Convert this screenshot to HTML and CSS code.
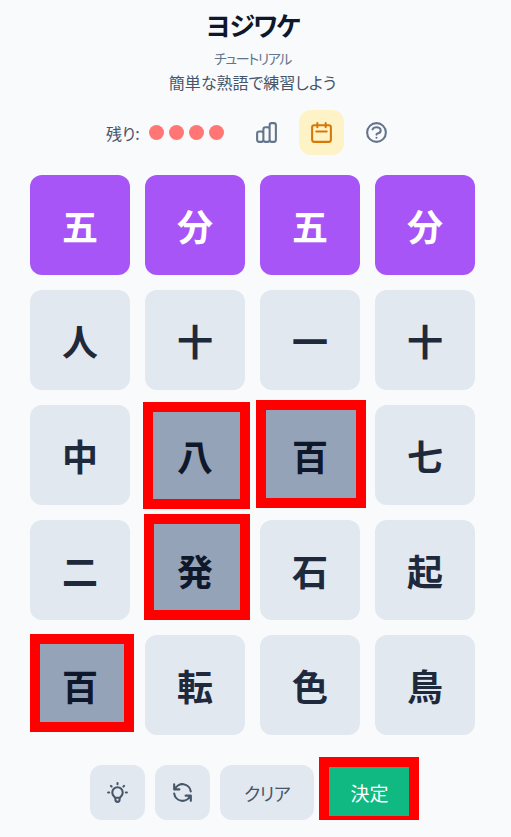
FILE: index.html
```html
<!DOCTYPE html>
<html lang="ja">
<head>
  <meta charset="UTF-8">
  <meta name="viewport" content="width=device-width, initial-scale=1.0">
  <title>ヨジワケ</title>
  <link rel="stylesheet" href="styles.css">
</head>
<body>
  <main class="app">
    <header class="header">
      <h1 class="title">ヨジワケ</h1>
      <p class="mode">チュートリアル</p>
      <p class="desc">簡単な熟語で練習しよう</p>
    </header>

    <div class="status">
      <span class="lives-label">残り:</span>
      <div class="lives">
        <span class="dot"></span>
        <span class="dot"></span>
        <span class="dot"></span>
        <span class="dot"></span>
      </div>
      <div class="status-buttons">
        <button class="icon-btn">
          <svg viewBox="0 0 24 24"><path d="M9 19v-6a2 2 0 00-2-2H5a2 2 0 00-2 2v6a2 2 0 002 2h2a2 2 0 002-2zm0 0V9a2 2 0 012-2h2a2 2 0 012 2v10m-6 0a2 2 0 002 2h2a2 2 0 002-2m0 0V5a2 2 0 012-2h2a2 2 0 012 2v14a2 2 0 01-2 2h-2a2 2 0 01-2-2z"/></svg>
        </button>
        <button class="icon-btn icon-btn-active">
          <svg viewBox="0 0 24 24"><path d="M8 7V3m8 4V3m-9 8h10M5 21h14a2 2 0 002-2V7a2 2 0 00-2-2H5a2 2 0 00-2 2v12a2 2 0 002 2z"/></svg>
        </button>
        <button class="icon-btn">
          <svg viewBox="0 0 24 24"><path d="M8.228 9c.549-1.165 2.03-2 3.772-2 2.21 0 4 1.343 4 3 0 1.4-1.278 2.575-3.006 2.907-.542.104-.994.54-.994 1.093m0 3h.01M21 12a9 9 0 11-18 0 9 9 0 0118 0z"/></svg>
        </button>
      </div>
    </div>

    <div class="board">
      <div class="tile tile-solved">五</div>
      <div class="tile tile-solved">分</div>
      <div class="tile tile-solved">五</div>
      <div class="tile tile-solved">分</div>

      <div class="tile">人</div>
      <div class="tile">十</div>
      <div class="tile">一</div>
      <div class="tile">十</div>

      <div class="tile">中</div>
      <div class="tile tile-selected">八<span class="mark mark-hachi"></span></div>
      <div class="tile tile-selected">百<span class="mark mark-hyaku"></span></div>
      <div class="tile">七</div>

      <div class="tile">二</div>
      <div class="tile tile-selected">発<span class="mark mark-hatsu"></span></div>
      <div class="tile">石</div>
      <div class="tile">起</div>

      <div class="tile tile-selected">百<span class="mark mark-hyaku2"></span></div>
      <div class="tile">転</div>
      <div class="tile">色</div>
      <div class="tile">鳥</div>
    </div>

    <div class="controls">
      <button class="ctrl ctrl-icon">
        <svg viewBox="0 0 24 24"><path d="M9.663 17h4.673M12 3v1m6.364 1.636l-.707.707M21 12h-1M4 12H3m3.343-5.657l-.707-.707m2.828 9.9a5 5 0 117.072 0l-.548.547A3.374 3.374 0 0014 18.469V19a2 2 0 11-4 0v-.531c0-.895-.356-1.754-.988-2.386l-.548-.547z"/></svg>
      </button>
      <button class="ctrl ctrl-icon">
        <svg viewBox="0 0 24 24"><path d="M4 4v5h.582m15.356 2A8.001 8.001 0 004.582 9m0 0H9m11 11v-5h-.581m0 0a8.003 8.003 0 01-15.357-2m15.357 2H15"/></svg>
      </button>
      <button class="ctrl ctrl-text">クリア</button>
      <button class="ctrl ctrl-submit">決定<span class="mark mark-submit"></span></button>
    </div>
  </main>
</body>
</html>
```

FILE: styles.css
```css
body {
  margin: 0;
  background-color: #f8fafc;
  font-family: "Noto Sans CJK JP", "Noto Sans", sans-serif;
}

.app {
  width: 505px;
  display: flex;
  flex-direction: column;
  align-items: center;
}

.header {
  text-align: center;
  padding-top: 7px;
}

.title {
  margin: 0;
  font-size: 26px;
  line-height: 36px;
  font-weight: 700;
  letter-spacing: -1.5px;
  color: #0f172a;
  font-feature-settings: "palt";
}

.mode {
  margin: 5px 0 0;
  font-size: 14px;
  line-height: 20px;
  letter-spacing: -1.4px;
  color: #64748b;
  font-feature-settings: "palt";
}

.desc {
  margin: 2px 0 0;
  font-size: 16px;
  line-height: 24px;
  color: #475569;
  font-feature-settings: "palt";
}

.status {
  display: flex;
  align-items: center;
  margin-top: 16px;
  height: 45px;
}

.lives-label {
  width: 43px;
  font-size: 16px;
  color: #475569;
  font-feature-settings: "palt";
}

.lives {
  display: flex;
  gap: 5px;
}

.dot {
  width: 15px;
  height: 15px;
  border-radius: 50%;
  background-color: #ff7675;
}

.status-buttons {
  display: flex;
  gap: 10px;
  margin-left: 20px;
}

.icon-btn {
  width: 45px;
  height: 45px;
  padding: 0;
  border: none;
  border-radius: 12px;
  background: none;
  display: flex;
  align-items: center;
  justify-content: center;
  color: #64748b;
}

.icon-btn svg {
  width: 25px;
  height: 25px;
  fill: none;
  stroke: currentColor;
  stroke-width: 2;
  stroke-linecap: round;
  stroke-linejoin: round;
}

.icon-btn-active {
  background-color: #fef3c7;
  color: #d97706;
}

.board {
  display: grid;
  grid-template-columns: repeat(4, 100px);
  grid-auto-rows: 100px;
  gap: 15px;
  margin-top: 20px;
}

.tile {
  position: relative;
  display: flex;
  align-items: center;
  justify-content: center;
  border-radius: 12px;
  background-color: #e2e8f0;
  color: #1e293b;
  font-size: 36px;
  font-weight: 700;
}

.tile-solved {
  background-color: #a855f7;
  color: #fff;
}

.tile-selected {
  background: none;
  color: #0f172a;
}

/* red highlight boxes, each one sits a little off its tile */
.mark {
  position: absolute;
  border: 10px solid #f00;
  pointer-events: none;
}

.tile-selected .mark {
  z-index: -1;
  background-color: #94a3b8;
}

.mark-hachi { inset: -2.7px -5.3px -4px -1.7px; }
.mark-hyaku { inset: -4.7px -6.3px -3.3px -3.7px; }
.mark-hatsu { inset: -5.7px -5.3px -0.3px -0.7px; }
.mark-hyaku2 { inset: -0.7px -4.3px 2.7px 0.3px; }
.mark-submit { inset: -7.7px -4.3px -6.3px -4.7px; }

.controls {
  display: flex;
  gap: 10px;
  margin-top: 30px;
}

.ctrl {
  position: relative;
  height: 55px;
  padding: 0;
  border: none;
  border-radius: 12px;
  background-color: #e2e8f0;
  color: #475569;
  font-family: inherit;
  font-size: 18px;
  font-feature-settings: "palt";
}

.ctrl-icon {
  width: 55px;
  display: flex;
  align-items: center;
  justify-content: center;
}

.ctrl-icon svg {
  width: 25px;
  height: 25px;
  fill: none;
  stroke: currentColor;
  stroke-width: 2;
  stroke-linecap: round;
  stroke-linejoin: round;
}

.ctrl-text {
  width: 94px;
  letter-spacing: -0.5px;
}

.ctrl-submit {
  width: 91px;
  background-color: #10b981;
  color: #fff;
  font-size: 19px;
}
```
